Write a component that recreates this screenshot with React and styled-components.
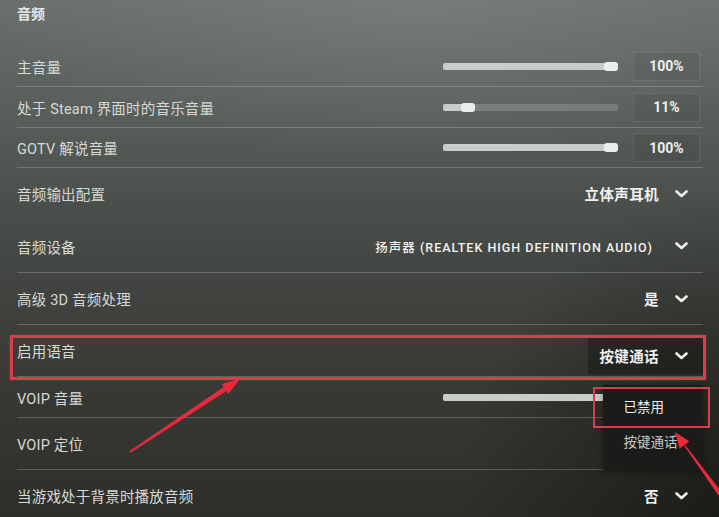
import React from "react";
import styled, { createGlobalStyle, css } from "styled-components";

const GlobalStyle = createGlobalStyle`
  html, body {
    margin: 0;
    padding: 0;
    background: #2c2d29;
  }
  * {
    box-sizing: border-box;
  }
`;

const FONT = `"Roboto", "Noto Sans CJK SC", "Noto Sans", sans-serif`;

const settings = [
  { label: "主音量", type: "slider", value: 100, height: 41 },
  { label: "处于 Steam 界面时的音乐音量", type: "slider", value: 11, height: 41 },
  { label: "GOTV 解说音量", type: "slider", value: 100, height: 40 },
  { label: "音频输出配置", type: "select", value: "立体声耳机", height: 52, noDivider: true },
  { label: "音频设备", type: "select", value: "扬声器 (REALTEK HIGH DEFINITION AUDIO)", height: 53 },
  { label: "高级 3D 音频处理", type: "select", value: "是", height: 52 },
  {
    label: "启用语音",
    type: "select",
    value: "按键通话",
    height: 52,
    highlight: true,
    open: true,
    options: ["已禁用", "按键通话"],
  },
  // its value box sits under the open menu
  { label: "VOIP 音量", type: "slider", value: 100, height: 41, covered: true },
  { label: "VOIP 定位", type: "select", value: "", height: 52 },
  { label: "当游戏处于背景时播放音频", type: "select", value: "否", height: 52, noDivider: true },
];

const Screen = styled.div`
  position: relative;
  width: 719px;
  height: 517px;
  overflow: hidden;
  font-family: ${FONT};
  background:
    radial-gradient(ellipse 260px 320px at 719px 517px, rgba(10, 10, 8, 0.55), rgba(10, 10, 8, 0) 100%),
    radial-gradient(ellipse 420px 160px at 420px 0px, rgba(140, 148, 145, 0.35), rgba(140, 148, 145, 0) 100%),
    linear-gradient(180deg, #69706d 0%, #5b625e 18%, #4b504c 38%, #414440 55%, #383933 75%, #2f2f2a 100%);
`;

const Title = styled.div`
  height: 46px;
  padding: 5px 0 0 17px;
  font-size: 14px;
  font-weight: 700;
  color: #e6e8e6;
  line-height: 18px;
`;

const List = styled.div`
  display: flex;
  flex-direction: column;
  padding: 0 16px 0 17px;
`;

const Row = styled.div`
  position: relative;
  display: flex;
  align-items: center;
  justify-content: space-between;
  height: ${(p) => p.$height}px;
  border-bottom: 1px solid ${(p) => (p.$divider ? "rgba(225, 230, 225, 0.24)" : "transparent")};

  ${(p) =>
    p.$highlight &&
    css`
      &::after {
        content: "";
        position: absolute;
        top: 10px;
        bottom: -4px;
        left: -7px;
        right: -3px;
        border: 3px solid #d63e4b;
        box-shadow: 0 0 2px rgba(214, 62, 75, 0.6);
        pointer-events: none;
        z-index: 2;
      }
    `}
`;

const Label = styled.span`
  font-size: 14.5px;
  color: #d6d9d5;
  letter-spacing: 0.2px;
  white-space: nowrap;
`;

const SliderGroup = styled.div`
  display: flex;
  align-items: center;
  gap: 15px;
  padding-right: 3px;
`;

const Track = styled.div`
  position: relative;
  width: 175px;
  height: 7px;
  border-radius: 2px;
  background: rgba(215, 220, 215, 0.22);
`;

const Fill = styled.div`
  height: 100%;
  border-radius: 2px;
  background: #c9cdc9;
`;

const Thumb = styled.div`
  position: absolute;
  top: -1px;
  width: 14px;
  height: 9px;
  margin-left: -7px;
  border-radius: 3px;
  background: #eceeec;
`;

const ValueBox = styled.div`
  width: 67px;
  height: 29px;
  display: flex;
  align-items: center;
  justify-content: center;
  border: 1px solid ${(p) => (p.$empty ? "transparent" : "rgba(220, 225, 220, 0.13)")};
  background: ${(p) => (p.$empty ? "transparent" : "rgba(0, 0, 0, 0.06)")};
  color: #eceeec;
  font-size: 14px;
  font-weight: 700;
`;

const Select = styled.div`
  position: relative;
  display: flex;
  align-items: center;
  gap: 16px;
  height: 36px;
  margin-top: ${(p) => (p.$open ? "10px" : "0")};
  padding: 0 15px 0 11px;
  background: ${(p) => (p.$open ? "rgba(18, 18, 16, 0.42)" : "transparent")};
  color: #f1f2f0;
  font-size: 14.5px;
  font-weight: 700;
  white-space: nowrap;
`;

const SelectText = styled.span`
  letter-spacing: ${(p) => (p.$latin ? "1px" : "0.4px")};
  font-size: ${(p) => (p.$latin ? "12.5px" : "14.5px")};
  font-weight: ${(p) => (p.$latin ? 500 : 700)};
  margin-right: ${(p) => (p.$latin ? "6px" : "0")};
`;

const Menu = styled.div`
  position: absolute;
  top: 47px;
  left: 15px;
  right: 0;
  height: 85px;
  background: #1b1b19;
  box-shadow: 0 2px 6px rgba(0, 0, 0, 0.35);
  z-index: 3;
`;

const MenuItem = styled.div`
  position: relative;
  height: ${(p) => (p.$selected ? 43 : 26)}px;
  display: flex;
  align-items: center;
  padding-left: 20px;
  font-size: 13.5px;
  font-weight: 400;
  color: ${(p) => (p.$selected ? "#eef0ee" : "#c4c7c3")};

  ${(p) =>
    p.$selected &&
    css`
      &::after {
        content: "";
        position: absolute;
        top: 2px;
        bottom: 0;
        left: -10px;
        right: -7px;
        border: 2px solid #d63e4b;
        pointer-events: none;
      }
    `}
`;

const Arrows = styled.svg`
  position: absolute;
  inset: 0;
  pointer-events: none;
  z-index: 4;
`;

const Chevron = () => (
  <svg width="13" height="8" viewBox="0 0 13 8">
    <polyline
      points="1.5,1.5 6.5,6 11.5,1.5"
      fill="none"
      stroke="#f1f2f0"
      strokeWidth="2.6"
      strokeLinecap="round"
      strokeLinejoin="round"
    />
  </svg>
);

const Slider = ({ value, covered }) => {
  const pos = value === 100 ? 96 : value + 3;
  return (
    <SliderGroup>
      <Track>
        <Fill style={{ width: `${pos}%` }} />
        <Thumb style={{ left: `${pos}%` }} />
      </Track>
      <ValueBox $empty={covered}>{covered ? null : `${value}%`}</ValueBox>
    </SliderGroup>
  );
};

const Dropdown = ({ value, open, options }) => (
  <Select $open={open}>
    {value && <SelectText $latin={/[A-Z]{3}/.test(value)}>{value}</SelectText>}
    {value && <Chevron />}
    {open && (
      <Menu>
        {options.map((o, i) => (
          <MenuItem key={o} $selected={i === 0}>
            {o}
          </MenuItem>
        ))}
      </Menu>
    )}
  </Select>
);

export default function App() {
  return (
    <>
      <GlobalStyle />
      <Screen>
        <Title>音频</Title>
        <List>
          {settings.map((s) => (
            <Row
              key={s.label}
              $height={s.height}
              $divider={!s.noDivider}
              $highlight={s.highlight}
            >
              <Label>{s.label}</Label>
              {s.type === "slider" ? (
                <Slider value={s.value} covered={s.covered} />
              ) : (
                <Dropdown value={s.value} open={s.open} options={s.options} />
              )}
            </Row>
          ))}
        </List>

        {/* annotation arrows */}
        <Arrows width="719" height="517" viewBox="0 0 719 517">
          <polygon
            fill="#e92a3e"
            points="129.4,451.2 130.6,452.8 226.4,391.1 223.6,386.9"
          />
          <polygon fill="#e92a3e" points="240,379 228.3,394 221.7,384" />
          <polygon
            fill="#e92a3e"
            points="683,444 686,446 727,499 723,502"
          />
          <polygon fill="#e92a3e" points="675,432 689.4,441.4 679.6,448.6" />
        </Arrows>
      </Screen>
    </>
  );
}
